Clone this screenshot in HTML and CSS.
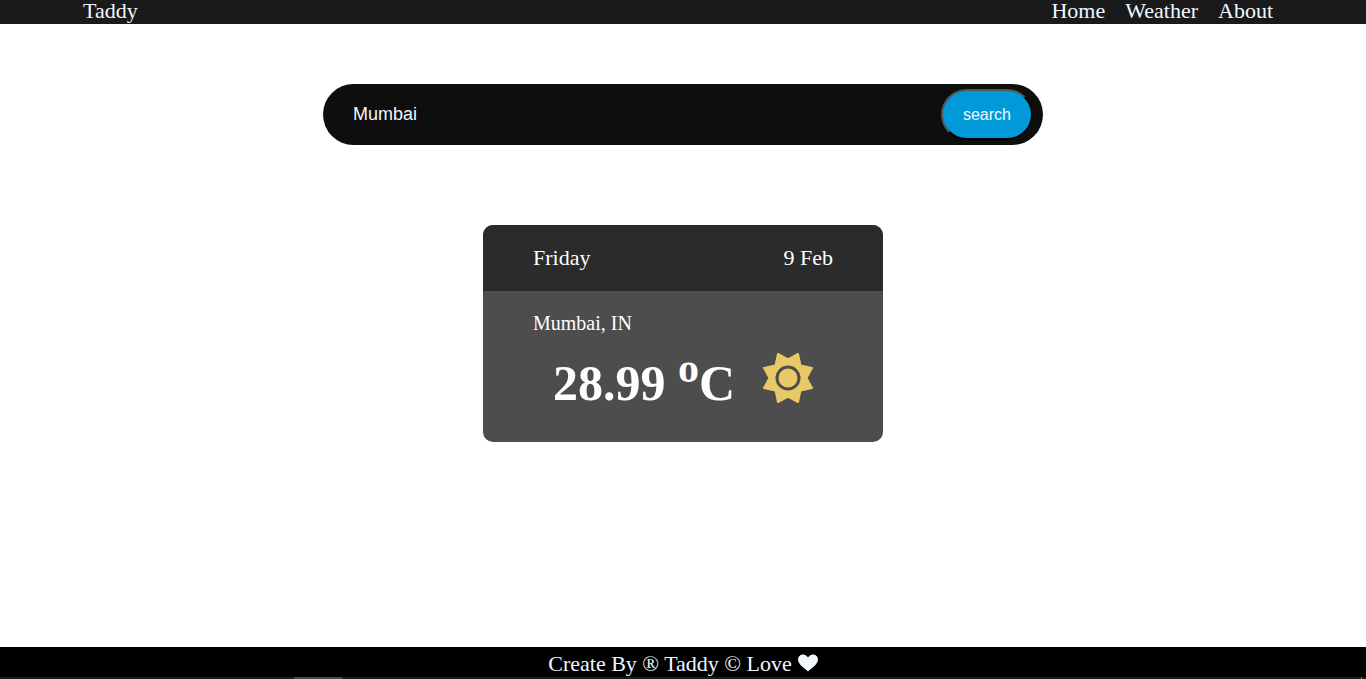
FILE: index.html
```html
<!DOCTYPE html>
<html lang="en">
<head>
<meta charset="utf-8">
<meta name="viewport" content="width=device-width, initial-scale=1">
<title>Taddy Weather</title>
<link rel="stylesheet" href="styles.css">
</head>
<body>
<header class="topbar">
  <div class="topbar-inner">
    <a class="brand" href="#">Taddy</a>
    <nav class="links">
      <a href="#">Home</a>
      <a href="#">Weather</a>
      <a href="#">About</a>
    </nav>
  </div>
</header>
<main class="content">
  <form class="search">
    <input class="search-input" type="text" value="Mumbai" aria-label="City">
    <button class="search-button" type="button">search</button>
  </form>
  <section class="card">
    <div class="card-head">
      <span>Friday</span>
      <span>9 Feb</span>
    </div>
    <div class="card-body">
      <p class="city">Mumbai, IN</p>
      <div class="reading">
        <h1 class="temp">28.99 <sup>o</sup>C</h1>
        <svg class="sun" viewBox="-26 -26 52 52" aria-hidden="true">
          <path d="M0-18.500L10-24L12.500-12.500L24-10L18.500 0L24 10L12.500 12.500L10 24L0 18.500L-10 24L-12.500 12.500L-24 10L-18.500 0L-24-10L-12.500-12.500L-10-24Z"/>
          <circle r="11"/>
        </svg>
      </div>
    </div>
  </section>
</main>
<footer class="footer">
  <p class="credit">Create By ® Taddy © Love
    <svg class="heart" viewBox="0 0 20 18" aria-label="heart" role="img"><path d="M10 17.500C7 14.500 0 10.500 0 5.500C0 2.500 2.500.5 5 .5C7.500.5 9 2 10 3.500C11 2 12.500.5 15 .5C17.500.5 20 2.500 20 5.500C20 10.500 13 14.500 10 17.500Z"/></svg>
  </p>
  <div class="strip"><span class="strip-tab"></span><span class="strip-edge"></span></div>
</footer>
</body>
</html>
```
FILE: styles.css
```css
* {
  box-sizing: border-box;
  margin: 0;
  padding: 0;
}

body {
  display: flex;
  flex-direction: column;
  min-height: 100vh;
  background: #fff;
  color: #fff;
  font-family: "Liberation Serif", "Times New Roman", serif;
  font-size: 22px;
}

a {
  color: aliceblue;
  text-decoration: none;
}

.topbar {
  background: #1a1a1a;
  line-height: 22px;
  padding-bottom: 2px;
}

.topbar-inner {
  display: flex;
  justify-content: space-between;
  max-width: 1200px;
  margin: 0 auto;
}

.links {
  display: flex;
  gap: 20px;
  padding-right: 10px;
}

.content {
  flex: 1;
  display: flex;
  flex-direction: column;
  align-items: center;
  gap: 80px;
  padding: 60px 20px;
}

.search {
  display: flex;
  align-items: center;
  width: 100%;
  max-width: 720px;
  padding: 5px 10px 5px 30px;
  border-radius: 32px;
  background: #0e0e0e;
}

.search-input {
  flex: 1;
  min-width: 0;
  border: 0;
  outline: 0;
  background: transparent;
  color: aliceblue;
  font: 18px "Liberation Sans", Arial, sans-serif;
}

.search-button {
  height: 51px;
  padding: 0 20px;
  border: 2px outset #000;
  border-radius: 26px;
  background: #009ad8;
  color: aliceblue;
  font: 16px "Liberation Sans", Arial, sans-serif;
}

.card {
  width: 100%;
  max-width: 400px;
  border-radius: 10px;
  overflow: hidden;
  background: #4d4d4d;
}

.card-head {
  display: flex;
  justify-content: space-between;
  padding: 20px 50px;
  background: #2b2b2b;
  line-height: 26px;
}

.card-body {
  padding: 20px 50px 30px;
}

.city {
  font-size: 20px;
  line-height: 24px;
}

.reading {
  display: flex;
  justify-content: space-between;
  align-items: center;
  padding: 8px 19px 0 20px;
}

.temp {
  font-size: 50px;
  line-height: 58px;
  padding-top: 11px;
  white-space: nowrap;
}

.temp sup {
  font-size: 42px;
  font-weight: bold;
  line-height: 0;
}

.sun {
  width: 52px;
  height: 52px;
  fill: #e9c967;
  stroke: #e9c967;
  stroke-width: 2;
  stroke-linejoin: round;
}

.sun circle {
  stroke: #4d4d4d;
  stroke-width: 3;
}

.footer {
  background: #000;
  color: aliceblue;
}

.credit {
  display: flex;
  justify-content: center;
  align-items: center;
  gap: 6px;
  line-height: 26px;
  padding-top: 4px;
}

.heart {
  width: 20px;
  height: 18px;
  margin-bottom: 2px;
  fill: aliceblue;
}

.strip {
  display: flex;
  justify-content: space-between;
  height: 2px;
  padding: 0 4px 0 294px;
  background: #1b191a;
}

.strip-tab {
  width: 48px;
  background: #4a4a4a;
}

.strip-edge {
  width: 1px;
  background: #777;
}
```
